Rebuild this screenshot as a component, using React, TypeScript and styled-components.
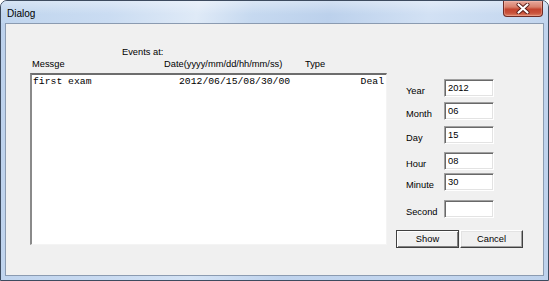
import React from "react";
import styled, { createGlobalStyle } from "styled-components";

const Global = createGlobalStyle`
  html, body { margin: 0; padding: 0; background: #ffffff; }
  body { font-family: "Liberation Sans", Arial, sans-serif; }
  * { box-sizing: border-box; }
`;

const Window = styled.div`
  width: 549px;
  height: 281px;
  border: 1px solid #3d4b5f;
  border-radius: 7px 7px 0 0;
  background: linear-gradient(100deg, #bcd1ec 0%, #c8daf1 25%, #d4e3f5 40%, #bfd3ed 55%, #c3d6ef 80%, #bed2ec 100%);
  display: flex;
  flex-direction: column;
  overflow: hidden;
`;

const TitleBar = styled.div`
  height: 22px;
  display: flex;
  align-items: center;
  justify-content: space-between;
  padding: 0 5px 0 6px;
  background: linear-gradient(180deg, rgba(255, 255, 255, 0.35), rgba(255, 255, 255, 0) 60%),
    linear-gradient(100deg, #c0d5ee 0%, #cadcf2 20%, #dfeaf7 36%, #c6d9f0 46%, #bcd1ec 60%, #d2e1f4 78%, #c2d5ee 100%);
`;

const Title = styled.span`
  font-family: "Liberation Sans", Arial, sans-serif;
  font-size: 10px;
  color: #000;
  margin-top: 2px;
`;

const CloseButton = styled.div`
  align-self: flex-start;
  width: 40px;
  height: 16px;
  border: 1px solid #6e2b25;
  border-top: none;
  border-radius: 0 0 4px 4px;
  background: linear-gradient(180deg, #e8a99c 0%, #d8806c 40%, #c4442e 55%, #c9523b 80%, #dc8367 100%);
  display: flex;
  align-items: center;
  justify-content: center;
  box-shadow: inset 0 0 0 1px rgba(255, 200, 190, 0.35);
`;

const Client = styled.div`
  flex: 1;
  margin: 0 4px 4px 4px;
  border: 1px solid #8b9bb1;
  background: #f0f0f0;
  display: flex;
  padding: 22px 0 0 24px;
  font-family: "Liberation Sans", Arial, sans-serif;
  font-size: 9.3px;
  line-height: 12px;
  color: #000;
`;

const LeftColumn = styled.div`
  width: 357px;
  display: flex;
  flex-direction: column;
`;

const EventsLabel = styled.div`
  margin-left: 92px;
`;

const HeaderRow = styled.div`
  display: flex;
`;

const HeaderCell = styled.span<{ $w?: number; $pl?: number }>`
  width: ${(p) => (p.$w ? `${p.$w}px` : "auto")};
  padding-left: ${(p) => p.$pl ?? 0}px;
`;

const ListBox = styled.div`
  margin-top: 3px;
  height: 172px;
  background: #fff;
  border-style: solid;
  border-width: 2px 1px 1px 2px;
  border-color: #6d6d6d #f4f4f4 #f4f4f4 #8a8a8a;
  padding: 1px 2px 0 1px;
  font-family: "Liberation Mono", "Courier New", monospace;
  font-size: 9.75px;
  line-height: 12px;
`;

const ListRow = styled.div`
  display: flex;
  white-space: pre;
`;

const MsgCell = styled.span`
  width: 146px;
`;

const DateCell = styled.span`
  flex: 1;
`;

const TypeCell = styled.span`
  text-align: right;
`;

const RightColumn = styled.div`
  margin-left: 9px;
  padding-top: 33px;
  display: flex;
  flex-direction: column;
`;

const FieldRow = styled.div<{ $mt: number }>`
  display: flex;
  align-items: flex-end;
  margin-top: ${(p) => p.$mt}px;
  padding-left: 10px;
`;

const FieldLabel = styled.label`
  width: 38px;
`;

const FieldInput = styled.input`
  width: 50px;
  height: 18px;
  margin: 0;
  padding: 0 3px;
  background: #fff;
  font-family: "Liberation Sans", Arial, sans-serif;
  font-size: 9.3px;
  color: #000;
  border-style: solid;
  border-width: 1px;
  border-color: #a0a0a0 #ffffff #ffffff #a0a0a0;
  box-shadow: inset 1px 1px 0 #696969, inset -1px -1px 0 #e3e3e3;
  outline: none;
`;

const ButtonRow = styled.div`
  display: flex;
  gap: 1px;
  margin-top: 12px;
`;

const Button = styled.button<{ $default?: boolean }>`
  width: 63px;
  height: 18px;
  margin: 0;
  padding: 0;
  font-family: "Liberation Sans", Arial, sans-serif;
  font-size: 9.3px;
  color: #000;
  background: #f0f0f0;
  border: 1px solid ${(p) => (p.$default ? "#404040" : "#f0f0f0")};
  border-color: ${(p) => (p.$default ? "#404040" : "#ffffff #404040 #404040 #ffffff")};
  box-shadow: ${(p) =>
    p.$default
      ? "inset 1px 1px 0 #ffffff, inset -1px -1px 0 #808080"
      : "inset -1px -1px 0 #a0a0a0, inset 1px 1px 0 #e3e3e3"};
`;

const fields: { label: string; value: string; mt: number }[] = [
  { label: "Year", value: "2012", mt: 0 },
  { label: "Month", value: "06", mt: 5 },
  { label: "Day", value: "15", mt: 6 },
  { label: "Hour", value: "08", mt: 8 },
  { label: "Minute", value: "30", mt: 3 },
  { label: "Second", value: "", mt: 9 },
];

const CloseIcon = () => (
  <svg width="14" height="11" viewBox="0 0 14 11">
    <path d="M2.5 1.5 L11.5 9.5 M11.5 1.5 L2.5 9.5" stroke="#5a1d18" strokeWidth="4" strokeLinecap="round" />
    <path d="M2.5 1.5 L11.5 9.5 M11.5 1.5 L2.5 9.5" stroke="#ffffff" strokeWidth="2.2" strokeLinecap="round" />
  </svg>
);

export default function App() {
  return (
    <>
      <Global />
      <Window>
        <TitleBar>
          <Title>Dialog</Title>
          <CloseButton>
            <CloseIcon />
          </CloseButton>
        </TitleBar>
        <Client>
          <LeftColumn>
            <EventsLabel>Events at:</EventsLabel>
            <HeaderRow>
              <HeaderCell $w={134} $pl={2}>Messge</HeaderCell>
              <HeaderCell $w={141}>Date(yyyy/mm/dd/hh/mm/ss)</HeaderCell>
              <HeaderCell>Type</HeaderCell>
            </HeaderRow>
            <ListBox>
              <ListRow>
                <MsgCell>first exam</MsgCell>
                <DateCell>2012/06/15/08/30/00</DateCell>
                <TypeCell>Deal</TypeCell>
              </ListRow>
            </ListBox>
          </LeftColumn>
          <RightColumn>
            {fields.map((f) => (
              <FieldRow key={f.label} $mt={f.mt}>
                <FieldLabel>{f.label}</FieldLabel>
                <FieldInput readOnly defaultValue={f.value} />
              </FieldRow>
            ))}
            <ButtonRow>
              <Button $default>Show</Button>
              <Button>Cancel</Button>
            </ButtonRow>
          </RightColumn>
        </Client>
      </Window>
    </>
  );
}
